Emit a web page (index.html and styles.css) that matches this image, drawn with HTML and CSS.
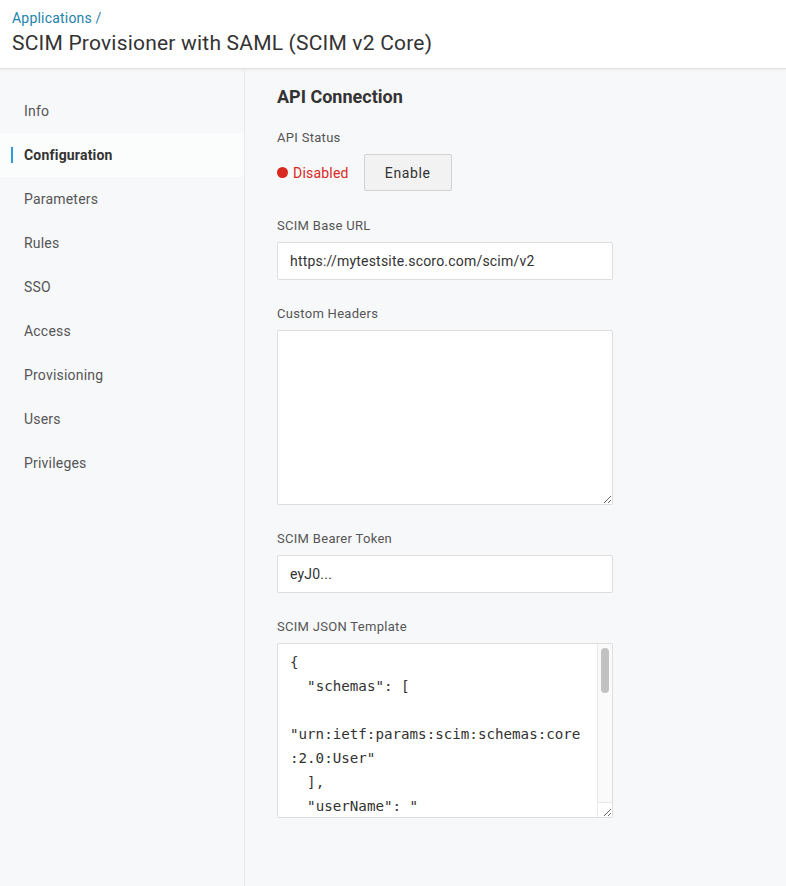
FILE: index.html
```html
<!DOCTYPE html>
<html lang="en">
<head>
    <meta charset="UTF-8">
    <meta name="viewport" content="width=device-width, initial-scale=1.0">
    <title>SCIM Provisioner with SAML (SCIM v2 Core)</title>
    <link rel="stylesheet" href="styles.css">
</head>
<body>

    <header class="page-header">
        <a class="breadcrumb" href="#">Applications /</a>
        <h1>SCIM Provisioner with SAML (SCIM v2 Core)</h1>
    </header>

    <div class="layout">
        <nav class="side-nav">
            <a href="#">Info</a>
            <a href="#" class="active">Configuration</a>
            <a href="#">Parameters</a>
            <a href="#">Rules</a>
            <a href="#">SSO</a>
            <a href="#">Access</a>
            <a href="#">Provisioning</a>
            <a href="#">Users</a>
            <a href="#">Privileges</a>
        </nav>

        <main class="content">
            <h2>API Connection</h2>

            <div class="form-group status-group">
                <label>API Status</label>
                <div class="status-row">
                    <span class="status disabled">Disabled</span>
                    <button type="button" class="btn">Enable</button>
                </div>
            </div>

            <div class="form-group">
                <label for="base-url">SCIM Base URL</label>
                <input type="text" id="base-url" value="https://mytestsite.scoro.com/scim/v2">
            </div>

            <div class="form-group">
                <label for="headers">Custom Headers</label>
                <textarea id="headers" class="headers"></textarea>
            </div>

            <div class="form-group">
                <label for="token">SCIM Bearer Token</label>
                <input type="text" id="token" value="eyJ0...">
            </div>

            <div class="form-group">
                <label for="template">SCIM JSON Template</label>
                <div class="json-wrap">
                    <textarea id="template" class="json">{
  "schemas": [
    "urn:ietf:params:scim:schemas:core:2.0:User"
  ],
  "userName": "{$parameters.scimusername}",
  "name": {
    "givenName": "{$user.firstname}",
    "familyName": "{$user.lastname}",
    "formatted": "{$user.firstname} {$user.lastname}"
  },
  "displayName": "{$user.display_name}",
  "emails": [
    {
      "value": "{$user.email}",
      "type": "work",
      "primary": true
    }
  ],
  "title": "{$user.title}",
  "active": true
}</textarea>
                    <div class="scrollbar"><span class="thumb"></span></div>
                    <div class="scroll-corner"></div>
                </div>
            </div>
        </main>
    </div>

</body>
</html>
```

FILE: styles.css
```css
body {
    font-family: Roboto, "Liberation Sans", Arial, sans-serif;
    background-color: #f7f8fa;
    margin: 0;
    padding: 0;
    color: #333;
    min-height: 100vh;
    display: flex;
    flex-direction: column;
}

.page-header {
    background-color: #fff;
    padding: 9px 12px 11px;
    border-bottom: 1px solid #e2e2e2;
    box-shadow: 0 1px 3px rgba(0, 0, 0, 0.06);
}

.breadcrumb {
    display: block;
    font-size: 14px;
    line-height: 18px;
    letter-spacing: 0.2px;
    color: #1c83ad;
    text-decoration: none;
}

.page-header h1 {
    margin: 2px 0 0;
    font-size: 21px;
    line-height: 28px;
    font-weight: 400;
    letter-spacing: 0.2px;
    color: #333;
}

.layout {
    flex: 1;
    display: flex;
}

.side-nav {
    width: 244px;
    padding-top: 20px;
    border-right: 1px solid #e8e9eb;
    display: flex;
    flex-direction: column;
}

.side-nav a {
    position: relative;
    display: block;
    height: 44px;
    line-height: 44px;
    padding-left: 24px;
    font-size: 14px;
    letter-spacing: 0.2px;
    color: #555;
    text-decoration: none;
}

.side-nav a.active {
    background-color: #fbfcfc;
    font-weight: 700;
    color: #333;
}

.side-nav a.active::before {
    content: "";
    position: absolute;
    left: 11px;
    top: 14px;
    width: 2px;
    height: 16px;
    background-color: #2d9cd6;
}

.content {
    flex: 1;
    padding: 17px 32px 40px;
}

.content h2 {
    margin: 0 0 20px;
    font-size: 18px;
    line-height: 22px;
    font-weight: 700;
    color: #333;
}

.form-group {
    width: 336px;
    margin-bottom: 24px;
}

.status-group {
    margin-bottom: 25px;
}

.form-group label {
    display: block;
    font-size: 13px;
    line-height: 19px;
    letter-spacing: 0.3px;
    color: #555;
    margin-bottom: 7px;
}

.status-row {
    display: flex;
    align-items: center;
    gap: 15px;
}

.status {
    display: flex;
    align-items: center;
    gap: 5px;
    font-size: 14px;
    letter-spacing: 0.2px;
}

.status.disabled {
    color: #d9281d;
}

.status.disabled::before {
    content: "";
    width: 11px;
    height: 11px;
    border-radius: 50%;
    background-color: #d9281d;
}

.btn {
    width: 88px;
    height: 37px;
    font-family: inherit;
    font-size: 14px;
    letter-spacing: 0.6px;
    color: #333;
    background-color: #f2f2f2;
    border: 1px solid #d3d3d3;
    border-radius: 2px;
    cursor: pointer;
}

.form-group input,
.form-group textarea {
    display: block;
    box-sizing: border-box;
    width: 100%;
    margin: 0;
    font-family: inherit;
    font-size: 14px;
    letter-spacing: 0.2px;
    color: #333;
    background-color: #fff;
    border: 1px solid #dedede;
    border-radius: 2px;
    outline: none;
}

.form-group input {
    height: 38px;
    padding: 0 12px;
}

.form-group textarea {
    height: 175px;
    resize: vertical;
}

.json-wrap {
    position: relative;
}

.form-group textarea.json {
    padding: 6px 27px 6px 12px;
    font-family: "DejaVu Sans Mono", "Liberation Mono", monospace;
    font-size: 14.2px;
    line-height: 24px;
    letter-spacing: 0;
    color: #333;
    overflow: hidden;
}

/* drawn scrollbar, the headless browser hides the real one */
.scrollbar {
    position: absolute;
    top: 1px;
    right: 1px;
    bottom: 16px;
    width: 14px;
    background-color: #fafafa;
    border-left: 1px solid #e8e8e8;
}

.thumb {
    position: absolute;
    top: 4px;
    left: 3px;
    width: 8px;
    height: 45px;
    border-radius: 4px;
    background-color: #c2c2c2;
}

.scroll-corner {
    position: absolute;
    right: 1px;
    bottom: 1px;
    width: 14px;
    height: 14px;
    border-left: 1px solid #e8e8e8;
    border-top: 1px solid #e8e8e8;
    pointer-events: none;
}
```
